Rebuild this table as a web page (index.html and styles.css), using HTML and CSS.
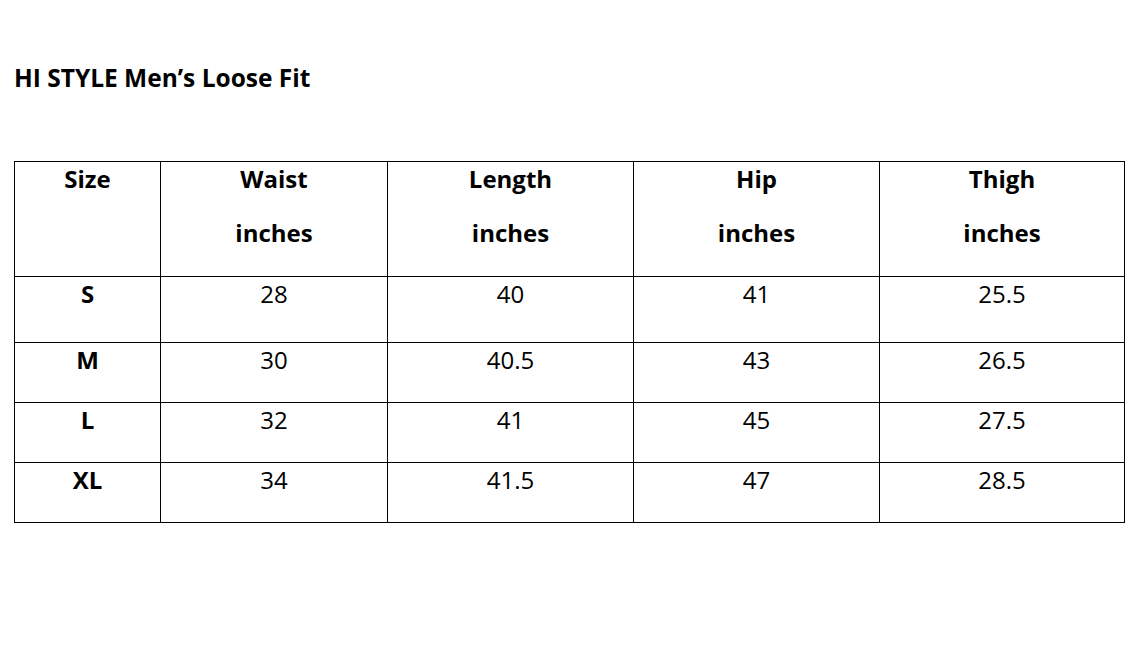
FILE: index.html
```html
<!DOCTYPE html>
<html>
<head>
<meta charset="utf-8">
<link rel="stylesheet" href="styles.css">
</head>
<body>
<h1 class="title">HI STYLE Men’s Loose Fit</h1>
<table class="chart">
  <colgroup>
    <col class="c1"><col class="c2"><col class="c3"><col class="c4"><col class="c5">
  </colgroup>
  <tr class="head">
    <th><div class="ln">Size</div></th>
    <th><div class="ln">Waist</div><div class="ln ln2">inches</div></th>
    <th><div class="ln">Length</div><div class="ln ln2">inches</div></th>
    <th><div class="ln">Hip</div><div class="ln ln2">inches</div></th>
    <th><div class="ln">Thigh</div><div class="ln ln2">inches</div></th>
  </tr>
  <tr class="r-first">
    <th><div class="ln">S</div></th><td><div class="ln">28</div></td><td><div class="ln">40</div></td><td><div class="ln">41</div></td><td><div class="ln">25.5</div></td>
  </tr>
  <tr class="r">
    <th><div class="ln">M</div></th><td><div class="ln">30</div></td><td><div class="ln">40.5</div></td><td><div class="ln">43</div></td><td><div class="ln">26.5</div></td>
  </tr>
  <tr class="r">
    <th><div class="ln">L</div></th><td><div class="ln">32</div></td><td><div class="ln">41</div></td><td><div class="ln">45</div></td><td><div class="ln">27.5</div></td>
  </tr>
  <tr class="r">
    <th><div class="ln">XL</div></th><td><div class="ln">34</div></td><td><div class="ln">41.5</div></td><td><div class="ln">47</div></td><td><div class="ln">28.5</div></td>
  </tr>
</table>
</body>
</html>
```
FILE: styles.css
```css
html, body {
  margin: 0;
  padding: 0;
  background: #fff;
  color: #000;
  font-family: "Open Sans", "Liberation Sans", sans-serif;
}
body {
  padding: 0 0 0 14px;
}
.title {
  margin: 0;
  padding-top: 60px;
  font-size: 24.5px;
  line-height: 36px;
  font-weight: 700;
  height: 101px;
}
.chart {
  border-collapse: collapse;
  width: 1110px;
  table-layout: fixed;
  font-size: 24px;
}
.c1 { width: 146px; }
.c2 { width: 227px; }
.c3 { width: 246px; }
.c4 { width: 246px; }
.c5 { width: 245px; }
.chart th, .chart td {
  border: 1px solid #000;
  padding: 0;
  vertical-align: top;
  text-align: center;
}
.chart th { font-weight: 700; }
.chart td { font-weight: 400; }
.ln {
  line-height: 34px;
}
.ln2 {
  margin-top: 20px;
}
.head th { height: 114px; }
.r-first th, .r-first td { height: 65px; }
.r th, .r td { height: 59px; }
```
